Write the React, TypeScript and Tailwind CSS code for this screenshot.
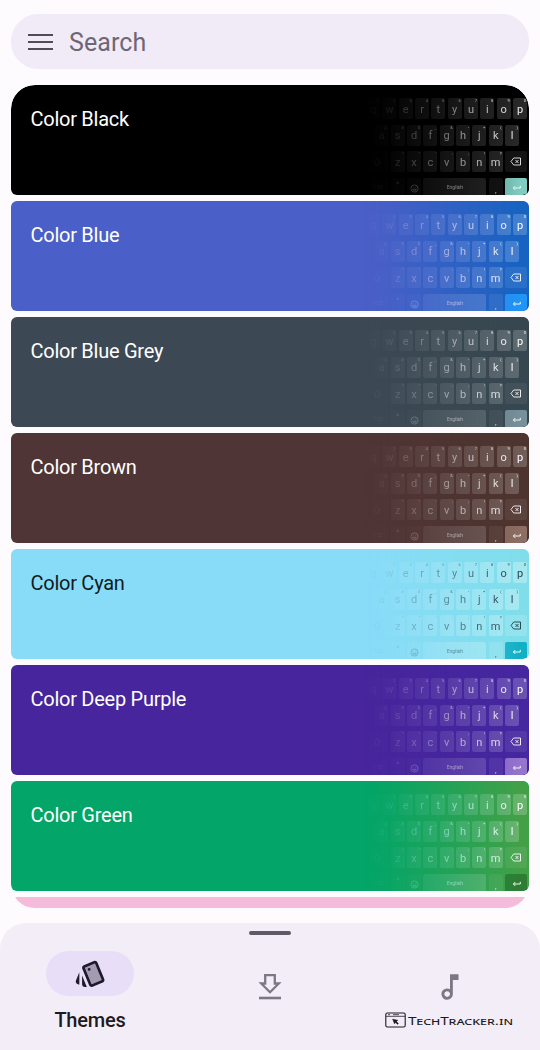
import React from "react";
import { MdOutlineMusicNote } from "react-icons/md";

type Theme = {
  name: string;
  card: string;
  board: string;
  key: string;
  special: string;
  enter: string;
  text: string;
};

const themes: Theme[] = [
  { name: "Color Black", card: "bg-black text-white rounded-t-[24px] rounded-b-[6px]", board: "bg-black rounded-tr-[24px]", key: "bg-[#292929]", special: "bg-[#141414]", enter: "bg-[#7fcdc1]", text: "text-[#f0f0f0]" },
  { name: "Color Blue", card: "bg-[#4a5fc7] text-white rounded-[6px]", board: "bg-[#1763c1]", key: "bg-[#4380ce]", special: "bg-[#2a70c8]", enter: "bg-[#2095f5]", text: "text-white" },
  { name: "Color Blue Grey", card: "bg-[#3c4954] text-white rounded-[6px]", board: "bg-[#37474f]", key: "bg-[#5d6a71]", special: "bg-[#43525a]", enter: "bg-[#78909c]", text: "text-white" },
  { name: "Color Brown", card: "bg-[#4f3535] text-white rounded-[6px]", board: "bg-[#4e342e]", key: "bg-[#715d58]", special: "bg-[#5b423c]", enter: "bg-[#8d6e63]", text: "text-white" },
  { name: "Color Cyan", card: "bg-[#88dcf8] text-[#111b20] rounded-[6px]", board: "bg-[#80deea]", key: "bg-[#a6e8f0]", special: "bg-[#92e3ed]", enter: "bg-[#12afc5]", text: "text-[#1f3a40]" },
  { name: "Color Deep Purple", card: "bg-[#47259c] text-white rounded-[6px]", board: "bg-[#4527a0]", key: "bg-[#6a52b3]", special: "bg-[#5438a8]", enter: "bg-[#9575cd]", text: "text-white" },
  { name: "Color Green", card: "bg-[#03a568] text-white rounded-[6px]", board: "bg-[#43a047]", key: "bg-[#69b36c]", special: "bg-[#50a754]", enter: "bg-[#2e7d32]", text: "text-white" },
];

function Key({ label, hint, tone }: { label: string; hint: string; tone: string }) {
  return (
    <div className={`relative flex h-[21px] w-[14px] shrink-0 items-center justify-center rounded-[2px] pt-px text-[11px] leading-none ${tone}`}>
      {label}
      <span className="absolute right-[1px] top-[1px] text-[4px] leading-none">{hint}</span>
    </div>
  );
}

function Row({ keys, hints, tone }: { keys: string; hints: string; tone: string }) {
  return (
    <>
      {keys.split("").map((k, i) => (
        <Key key={k} label={k} hint={hints[i]} tone={tone} />
      ))}
    </>
  );
}

function Keyboard({ theme }: { theme: Theme }) {
  return (
    <div
      className={`flex h-[110px] w-[165px] shrink-0 flex-col gap-[5.5px] overflow-hidden rounded-r-[6px] pr-[2px] pt-[13px] [mask-image:linear-gradient(to_right,transparent_0%,rgba(0,0,0,0.09)_15%,rgba(0,0,0,0.48)_50%,rgba(0,0,0,0.8)_78%,black_95%)] ${theme.board} ${theme.text}`}
    >
      <div className="flex justify-end gap-[2.33px]">
        <Row keys="qwertyuiop" hints="1234567890" tone={theme.key} />
      </div>
      <div className="flex justify-end gap-[2.33px] pr-[8px]">
        <Row keys="asdfghjkl" hints="@#$_&-+()" tone={theme.key} />
      </div>
      <div className="flex justify-end gap-[2.33px]">
        <div className={`flex h-[21px] w-[22px] items-center justify-center rounded-[2px] ${theme.special}`}>
          <svg viewBox="0 0 12 12" className="size-[10px]" fill="none" stroke="currentColor"><path d="M6 1.5 10 6H8v4H4V6H2Z" /></svg>
        </div>
        <Row keys="zxcvbnm" hints={"*\"':;!?"} tone={theme.key} />
        <div className={`flex h-[21px] w-[22px] items-center justify-center rounded-[2px] ${theme.special}`}>
          <svg viewBox="0 0 12 9" className="h-[9px] w-[12px]" fill="none" stroke="currentColor" strokeWidth="0.9"><path d="M3.7 1h6.8v7H3.7L1 4.5Z M5.5 3l3 3M8.5 3l-3 3" /></svg>
        </div>
      </div>
      <div className="flex h-[17px] justify-end gap-[2.33px]">
        <div className={`flex w-[22px] items-center justify-center rounded-t-[2px] pt-[4px] text-[5px] ${theme.special}`}>?123</div>
        <div className={`flex w-[14px] justify-center rounded-t-[2px] text-[8px] leading-[14px] ${theme.special}`}>^</div>
        <div className={`flex w-[14px] items-center justify-center rounded-t-[2px] pt-[4px] ${theme.special}`}>
          <svg viewBox="0 0 10 10" className="size-[9px]" fill="none" stroke="currentColor" strokeWidth="0.9"><circle cx="5" cy="5" r="4" /><path d="M3 5.8h4c-.4 2-3.6 2-4 0ZM3.5 3v1M6.5 3v1" /></svg>
        </div>
        <div className={`flex w-[63px] items-center justify-center rounded-t-[2px] pt-[4px] text-[5px] ${theme.key}`}>English</div>
        <div className={`flex w-[14px] items-end justify-center rounded-t-[2px] text-[8px] leading-[9px] ${theme.special}`}>,</div>
        <div className={`flex w-[22px] items-center justify-center rounded-t-[2px] pt-[4px] text-white ${theme.enter}`}>
          <svg viewBox="0 0 10 7" className="h-[6px] w-[9px]" fill="none" stroke="currentColor" strokeWidth="1.1"><path d="M9.4 1v2.5H1.5M3.6 1.2 1.3 3.5l2.3 2.3" /></svg>
        </div>
      </div>
    </div>
  );
}

export default function App() {
  return (
    <div className="flex h-[1050px] w-[540px] flex-col overflow-hidden bg-[#fefbff] pt-[14px] font-[Roboto,sans-serif]">
      <header className="mx-[11px] flex h-[55px] shrink-0 items-center rounded-[27px] bg-[#f1eaf7] pl-[17px] pt-px">
        <div className="flex w-[25px] flex-col gap-[5px]">
          <span className="h-[2px] bg-[#514b58]" />
          <span className="h-[2px] bg-[#514b58]" />
          <span className="h-[2px] bg-[#514b58]" />
        </div>
        <span className="ml-[16px] pt-px text-[25px] leading-none tracking-[0.1px] text-[#6d6775]">Search</span>
      </header>

      <main className="mx-[11px] mt-[16px] flex h-[823px] shrink-0 flex-col gap-[6px] overflow-hidden rounded-[24px]">
        {themes.map((t) => (
          <div key={t.name} className={`flex h-[110px] shrink-0 justify-between overflow-hidden ${t.card}`}>
            <span className="ml-[19.500px] mt-[22px] text-[20px] leading-[24px] tracking-[-0.26px]">{t.name}</span>
            <Keyboard theme={t} />
          </div>
        ))}
        <div className="h-[110px] shrink-0 rounded-[6px] bg-[#f5bbda]" />
      </main>

      <nav className="mt-[15px] flex h-[127px] shrink-0 flex-col items-center rounded-t-[26px] bg-[#f3edf8]">
        <div className="mt-[8px] h-[4px] w-[42px] rounded-full bg-[#605a66]" />
        <div className="grid w-full grid-cols-3">
          <div className="flex flex-col items-center pt-[16px]">
            <div className="flex h-[45px] w-[88px] items-center justify-center rounded-full bg-[#e9def8]">
              <svg viewBox="0 0 24 24" className="size-[33px] text-[#1e192b]" fill="currentColor">
                <path d="M15.22 4.75 7.87 7.79l4.96 11.96 7.35-3.05z" opacity=".34" />
                <path d="M2.53 19.65l1.34.56v-9.03l-2.43 5.86c-.41 1.02.08 2.19 1.09 2.61zm19.5-3.7L17.07 3.98c-.31-.75-1.04-1.21-1.81-1.23-.26 0-.53.04-.79.15L7.1 5.95c-.75.31-1.21 1.03-1.23 1.8-.01.27.04.54.15.8l4.96 11.97c.31.76 1.05 1.22 1.83 1.23.26 0 .52-.05.77-.15l7.36-3.05c1.02-.42 1.51-1.59 1.09-2.6zm-9.2 3.8L7.87 7.79l7.35-3.04h.01l4.95 11.95-7.35 3.05zM5.88 19.75c0 1.1.9 2 2 2h1.45l-3.45-8.34v6.34z" />
                <circle cx="11" cy="9" r="1" />
              </svg>
            </div>
            <span className="mt-[12px] text-[20px] font-medium leading-[24px] tracking-[-0.2px] text-[#1d1a22]">Themes</span>
          </div>
          <div className="flex justify-center pt-[39px]">
            <svg viewBox="0 0 24 26" className="h-[26px] w-[24px] text-[#7d7783]" fill="none" stroke="currentColor" strokeWidth="2.3">
              <path d="M7.2 1.2h9.600v8.300h4L12 18.200 3.200 9.500h4Z" />
              <path d="M1 24h22" strokeWidth="2.600" />
            </svg>
          </div>
          <div className="flex flex-col items-center pt-[35px]">
            <MdOutlineMusicNote className="size-[34px] text-[#7d7783]" />
            <div className="mt-[8px] flex w-[130px] items-center gap-[2px] text-[#1d1a22]">
              <svg viewBox="0 0 21 16" className="h-[16px] w-[21px] shrink-0" fill="none" stroke="currentColor" strokeWidth="1.1">
                <rect x="0.8" y="1" width="19.4" height="14" rx="1.5" />
                <path d="M1 4.3h19M3 2.7h2M8 2.7h6" strokeWidth="0.8" />
                <path d="m7.5 7 5.5 1.2-1.500 1.300 2 2-1 1-2-2-1 1.500Z" fill="currentColor" strokeWidth="0.3" />
              </svg>
              <svg viewBox="0 0 106 16" className="h-[16px] w-[106px] shrink-0">
                <text x="0" y="13" textLength="105" lengthAdjust="spacingAndGlyphs" fill="currentColor" className="font-['Noto_Sans',sans-serif] text-[11px] [font-variant-caps:small-caps]">TechTracker.in</text>
              </svg>
            </div>
          </div>
        </div>
      </nav>
    </div>
  );
}
